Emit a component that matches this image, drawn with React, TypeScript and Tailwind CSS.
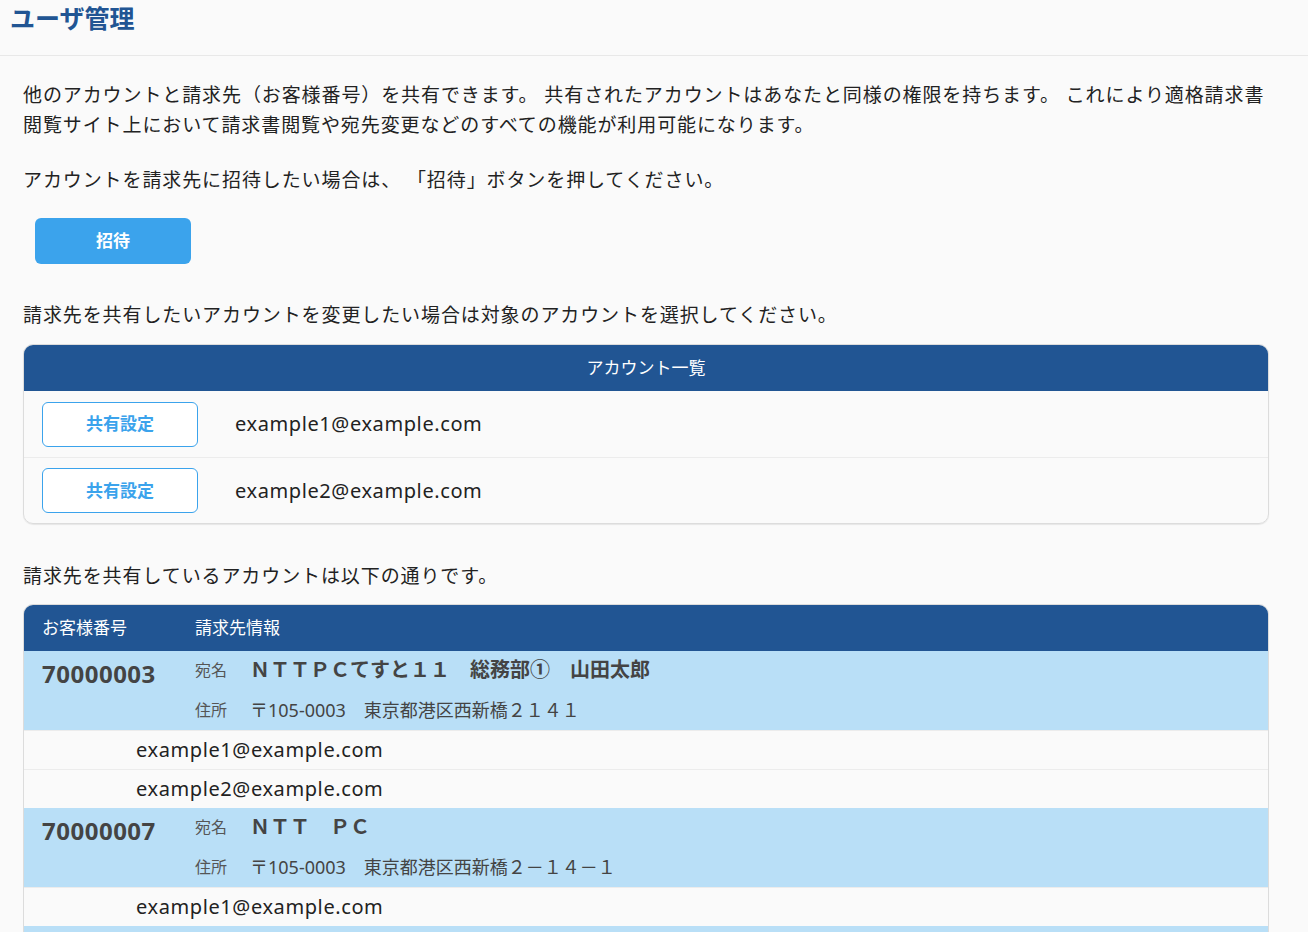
const shared = ["example1@example.com", "example2@example.com"];

const customers = [
  {
    no: "70000003",
    name: "ＮＴＴＰＣてすと１１　総務部①　山田太郎",
    addr: "〒105-0003　東京都港区西新橋２１４１",
    emails: ["example1@example.com", "example2@example.com"],
  },
  {
    no: "70000007",
    name: "ＮＴＴ　ＰＣ",
    addr: "〒105-0003　東京都港区西新橋２－１４－１",
    emails: ["example1@example.com"],
  },
  {
    no: "70000011",
    name: "ＮＴＴＰＣ",
    addr: "〒105-0003　東京都港区西新橋２－１４－１",
    emails: ["example1@example.com"],
  },
];

const font = { fontFamily: '"Noto Sans", "Noto Sans CJK JP", sans-serif' };

const App = () => {
  return (
    <div className="min-h-screen bg-[#fafafa] text-[#222]" style={font}>
      <header className="h-[56px] border-b border-[#e8e8e8] px-[10px] pt-[2px]">
        <h1 className="text-[25px] font-bold leading-[32px] text-[#215593]">ユーザ管理</h1>
      </header>

      <main className="pl-[23px] pr-[39px] pt-[24px] pb-10 text-[19px] leading-[30px] tracking-[0.9px]">
        <p>
          他のアカウントと請求先（お客様番号）を共有できます。 共有されたアカウントはあなたと同様の権限を持ちます。 これにより適格請求書閲覧サイト上において請求書閲覧や宛先変更などのすべての機能が利用可能になります。
        </p>
        <p className="mt-[25px]">アカウントを請求先に招待したい場合は、 「招待」ボタンを押してください。</p>

        <button className="mt-[23px] ml-[12px] flex h-[46px] w-[156px] items-center justify-center rounded-[6px] bg-[#3ba3ec] text-[17px] font-bold tracking-normal text-white">
          招待
        </button>

        <p className="mt-[36px]">請求先を共有したいアカウントを変更したい場合は対象のアカウントを選択してください。</p>

        <div className="mt-[14px] overflow-hidden rounded-[10px] border border-[#dcdcdc] tracking-normal shadow-[0_1px_1px_rgba(0,0,0,0.08)]">
          <div className="flex h-[46px] items-center justify-center bg-[#215593] text-[17px] text-white">
            アカウント一覧
          </div>
          {shared.map((email, i) => (
            <div
              key={email}
              className={`flex h-[66px] items-center pl-[18px] ${i > 0 ? "border-t border-[#ececec]" : ""}`}
            >
              <button className="flex h-[45px] w-[156px] items-center justify-center rounded-[6px] border border-[#3ba3ec] bg-white text-[17px] font-bold text-[#3ba3ec]">
                共有設定
              </button>
              <span className="ml-[37px] text-[20px] tracking-[0.6px] text-[#222]">{email}</span>
            </div>
          ))}
        </div>

        <p className="mt-[37px]">請求先を共有しているアカウントは以下の通りです。</p>

        <div className="mt-[13px] overflow-hidden rounded-t-[10px] border border-[#dcdcdc] tracking-normal">
          <div className="flex h-[46px] items-center bg-[#215593] text-[17px] text-white">
            <div className="w-[171px] pl-[18px]">お客様番号</div>
            <div>請求先情報</div>
          </div>
          {customers.map((c) => (
            <div key={c.no}>
              <div className="bg-[#b9dff7]">
                <div className="flex h-[38px] items-center">
                  <div className="w-[171px] pt-[8px] pl-[18px] text-[24px] font-bold tracking-[0.5px] text-[#444]">
                    {c.no}
                  </div>
                  <span className="w-[55px] text-[16px] text-[#555]">宛名</span>
                  <span className="text-[20px] font-bold text-[#444]">{c.name}</span>
                </div>
                <div className="flex h-[41px] items-center pl-[171px]">
                  <span className="w-[55px] text-[16px] text-[#555]">住所</span>
                  <span className="text-[18px] text-[#444]">{c.addr}</span>
                </div>
              </div>
              {c.emails.map((e) => (
                <div
                  key={e}
                  className="flex h-[39px] items-center border-t border-[#ececec] bg-[#fafafa] pl-[112px] text-[20px] tracking-[0.6px]"
                >
                  {e}
                </div>
              ))}
            </div>
          ))}
        </div>
      </main>
    </div>
  );
};

export default App;
